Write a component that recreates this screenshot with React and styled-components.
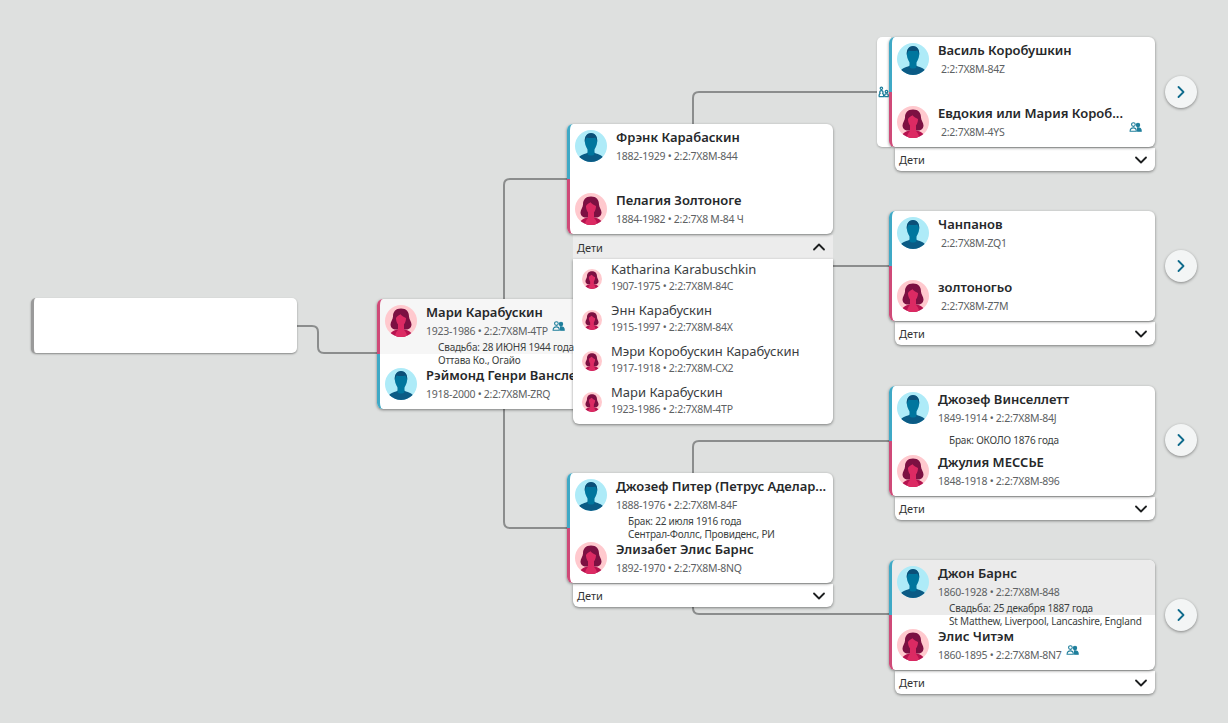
import React from "react";
import styled, { createGlobalStyle } from "styled-components";
import { ChevronRight, ChevronDown, ChevronUp } from "lucide-react";

const Global = createGlobalStyle`
  html, body { margin: 0; padding: 0; background: #dee0df; }
  body { font-family: "Noto Sans", "Open Sans", sans-serif; overflow: hidden; }
`;

const Canvas = styled.div`
  position: relative;
  width: 1228px;
  height: 723px;
  background: #dee0df;
  overflow: hidden;
`;
const Lines = styled.svg`
  position: absolute;
  inset: 0;
  path { fill: none; stroke: #8b8d8d; stroke-width: 2; }
`;
const Node = styled.div`
  position: absolute;
  left: ${(p) => p.$x}px;
  top: ${(p) => p.$y}px;
  width: 266px;
`;
const Couple = styled.div`
  position: relative;
  display: flex;
  flex-direction: column;
  background: #fff;
  border-radius: 6px;
  box-shadow: 0 1px 3px rgba(0, 0, 0, 0.45);
`;
const Person = styled.div`
  position: relative;
  height: 55px;
  box-sizing: border-box;
  display: flex;
  gap: 9px;
  padding: ${(p) => (p.$lower ? "14px" : "6px")} 4px 0 5px;
  background: ${(p) => p.$tint || "transparent"};
  border-left: 3px solid ${(p) => (p.$sex === "f" ? "#cf4a78" : "#3fa9c6")};
  border-radius: ${(p) => (p.$lower ? "0 0 6px 6px" : "6px 6px 0 0")};
`;
const Avatar = styled.span`
  flex: none;
  display: block;
  width: ${(p) => p.$size}px;
  height: ${(p) => p.$size}px;
  border-radius: 50%;
  overflow: hidden;
  svg { display: block; width: 100%; height: 100%; }
`;
const Info = styled.div`
  min-width: 0;
  flex: 1;
`;
const Name = styled.div`
  font-size: 13px;
  line-height: 18px;
  font-weight: 600;
  color: #26282a;
  white-space: nowrap;
  margin-top: -2px;
`;
const Meta = styled.div`
  display: flex;
  align-items: flex-start;
  font-size: 10.5px;
  letter-spacing: -0.25px;
  line-height: 14px;
  color: #5d6163;
  margin-top: ${(p) => (p.$tight ? "2px" : "3px")};
  padding-left: ${(p) => (p.$noYears ? "3px" : "0")};
  white-space: nowrap;
`;
const InlineBadge = styled.span`
  display: inline-flex;
  margin: -3px 0 0 4px;
  color: #1f7f9c;
`;
const CornerBadge = styled.span`
  position: absolute;
  right: 13px;
  bottom: 15px;
  display: inline-flex;
  color: #1f7f9c;
`;
const Marriage = styled.div`
  position: absolute;
  left: ${(p) => p.$left}px;
  top: 54px;
  transform: translateY(-50%);
  font-size: 10px;
  letter-spacing: -0.2px;
  line-height: 12.5px;
  color: #3c3f41;
  white-space: nowrap;
  z-index: 1;
`;
const Footer = styled.div`
  margin: 1px 0 0 6px;
  height: ${(p) => (p.$open ? "24px" : "23px")};
  box-sizing: border-box;
  background: ${(p) => (p.$open ? "#ececec" : "#fff")};
  display: flex;
  align-items: center;
  justify-content: space-between;
  padding: 0 4px 0 4px;
  font-size: 11px;
  color: #333;
  border-radius: ${(p) => (p.$open ? "0" : "0 0 6px 6px")};
  box-shadow: ${(p) => (p.$open ? "none" : "0 1px 3px rgba(0,0,0,.45)")};
  svg { color: #1d1f20; }
`;
const ChildPanel = styled.div`
  margin-left: 6px;
  background: #fff;
  border-radius: 0 0 6px 6px;
  box-shadow: 0 1px 3px rgba(0, 0, 0, 0.45);
  height: 165px;
  overflow: hidden;
`;
const ChildRow = styled.div`
  height: 41px;
  display: flex;
  align-items: center;
  gap: 9px;
  padding-left: 9px;
  > span { margin-top: -1px; }
`;
const ChildName = styled.div`
  font-size: 13px;
  line-height: 16px;
  color: #3a3d3f;
  margin-top: -6px;
  white-space: nowrap;
`;
const Empty = styled.div`
  height: 55px;
  background: #fff;
  border-left: 3px solid #9a9a9a;
  border-radius: 5px;
  box-shadow: 0 1px 2px rgba(0, 0, 0, 0.4);
`;
const Tab = styled.div`
  position: absolute;
  left: -12px;
  top: 0;
  width: 14px;
  height: 110px;
  padding-right: 2px;
  box-sizing: border-box;
  background: #fff;
  border-radius: 5px 0 0 5px;
  box-shadow: 0 1px 2px rgba(0, 0, 0, 0.25);
  display: flex;
  align-items: center;
  justify-content: center;
  color: #1f7f9c;
`;
const Next = styled.button`
  position: absolute;
  left: ${(p) => p.$x}px;
  top: ${(p) => p.$y}px;
  width: 32px;
  height: 32px;
  padding: 0;
  border: 0;
  border-radius: 50%;
  background: #f3f5f5;
  box-shadow: 0 1px 3px rgba(0, 0, 0, 0.4);
  display: flex;
  align-items: center;
  justify-content: center;
  color: #0f6b8c;
`;

const Man = () => (
  <svg viewBox="0 0 32 32">
    <rect width="32" height="32" fill="#aeebf8" />
    <path d="M2 32c0-5 4-7 9-8.500l2-1h6l2 1c5 1.500 9 3.500 9 8.500z" fill="#0b5b85" />
    <path d="M12.500 18h7v6c-1 2-6 2-7 0z" fill="#00769e" />
    <path d="M9.800 11c0-5 2.600-7.500 6.200-7.500S22.200 6 22.200 11c0 5-3 10-6.200 10S9.800 16 9.800 11z" fill="#00769e" />
    <path d="M9.800 12c-.5-6 2.500-9 6.200-9s6.700 3 6.200 9c-.6-2-1-3.500-2-4.500-2 .8-6.500.8-8.400 0-1 1-1.400 2.500-2 4.500z" fill="#0b4f78" />
  </svg>
);
const Woman = () => (
  <svg viewBox="0 0 32 32">
    <rect width="32" height="32" fill="#ffc9ce" />
    <path d="M16 3.500c-5.500 0-8 3.500-8 8 0 3-2.500 5-2.500 8 0 3 2.500 5 5.500 5h10c3 0 5.500-2 5.500-5 0-3-2.500-5-2.500-8 0-4.500-2.500-8-8-8z" fill="#7c1042" />
    <path d="M4.500 32c0-4.500 3.500-6.500 7.500-7.500h8c4 1 7.500 3 7.500 7.500z" fill="#b5124f" />
    <path d="M13 18h6v7c-1 1.500-5 1.500-6 0z" fill="#dc2a63" />
    <path d="M11 13c1-2 3-3 4.500-3.800 1.500 1.800 3.500 3 5.500 3.800 0 4-2 8-5 8s-5-4-5-8z" fill="#dc2a63" />
    <path d="M10 32c0-4 2-6 3-7h6c1 1 3 3 3 7z" fill="#dc2a63" />
  </svg>
);

const RelIcon = () => (
  <svg width="13" height="10" viewBox="0 0 15 12" fill="none" stroke="currentColor" strokeWidth="1.300">
    <circle cx="5" cy="3" r="2.200" />
    <path d="M1 11c0-3 1.500-4 4-4s3.500 1 3.500 4z" />
    <circle cx="10.500" cy="3.500" r="2" fill="currentColor" />
    <path d="M9.800 7c3-.3 4.600 1 4.600 4H10z" fill="currentColor" />
  </svg>
);
const CoupleIcon = () => (
  <svg width="11" height="12" viewBox="0 0 13 13" fill="none" stroke="currentColor" strokeWidth="1.500">
    <circle cx="4" cy="2.200" r="1.400" />
    <path d="M1.500 12c-.6-2 0-3 1-4-.8-1-.6-3 1.500-3s2.300 2 1.500 3c1 1 1.600 2 1 4z" />
    <circle cx="10" cy="6" r="1.500" />
    <path d="M8 12c-.4-2 .2-3 1-3.300h2c.9.300 1.400 1.300 1 3.300z" />
  </svg>
);

const Face = ({ sex, size = 32 }) => (
  <Avatar $size={size}>{sex === "f" ? <Woman /> : <Man />}</Avatar>
);

const PersonRow = ({ p, lower }) => (
  <Person $sex={p.sex} $tint={p.tint} $lower={lower}>
    <Face sex={p.sex} />
    <Info>
      <Name>{p.name}</Name>
      <Meta $noYears={p.noYears}>
        {p.meta}
        {p.badge && (
          <InlineBadge>
            <RelIcon />
          </InlineBadge>
        )}
      </Meta>
    </Info>
    {p.corner && (
      <CornerBadge>
        <RelIcon />
      </CornerBadge>
    )}
  </Person>
);

const kids = [
  ["Katharina Karabuschkin", "1907-1975 • 2:2:7X8M-84C"],
  ["Энн Карабускин", "1915-1997 • 2:2:7X8M-84X"],
  ["Мэри Коробускин Карабускин", "1917-1918 • 2:2:7X8M-CX2"],
  ["Мари Карабускин", "1923-1986 • 2:2:7X8M-4TP"],
];

const nodes = [
  {
    x: 377, y: 299, textLeft: 61,
    a: { sex: "f", name: "Мари Карабускин", meta: "1923-1986 • 2:2:7X8M-4TP", badge: true, tint: "#f6f6f6" },
    b: { sex: "m", name: "Рэймонд Генри Ванслетт", meta: "1918-2000 • 2:2:7X8M-ZRQ" },
    marriage: ["Свадьба: 28 ИЮНЯ 1944 года", "Оттава Ко., Огайо"],
  },
  {
    x: 567, y: 124, open: true,
    a: { sex: "m", name: "Фрэнк Карабаскин", meta: "1882-1929 • 2:2:7X8M-844" },
    b: { sex: "f", name: "Пелагия Золтоноге", meta: "1884-1982 • 2:2:7X8 М-84 Ч" },
  },
  {
    x: 567, y: 473, footer: true, textLeft: 61,
    a: { sex: "m", name: "Джозеф Питер (Петрус Аделар...", meta: "1888-1976 • 2:2:7X8M-84F" },
    b: { sex: "f", name: "Элизабет Элис Барнс", meta: "1892-1970 • 2:2:7X8M-8NQ" },
    marriage: ["Брак: 22 июля 1916 года", "Сентрал-Фоллс, Провиденс, РИ"],
  },
  {
    x: 889, y: 37, footer: true, tab: true,
    a: { sex: "m", name: "Василь Коробушкин", meta: "2:2:7X8M-84Z", noYears: true },
    b: { sex: "f", name: "Евдокия или Мария Короб...", meta: "2:2:7X8M-4YS", noYears: true, corner: true },
  },
  {
    x: 889, y: 211, footer: true,
    a: { sex: "m", name: "Чанпанов", meta: "2:2:7X8M-ZQ1", noYears: true },
    b: { sex: "f", name: "золтоногьо", meta: "2:2:7X8M-Z7M", noYears: true },
  },
  {
    x: 889, y: 386, footer: true, textLeft: 60,
    a: { sex: "m", name: "Джозеф Винселлетт", meta: "1849-1914 • 2:2:7X8M-84J" },
    b: { sex: "f", name: "Джулия МЕССЬЕ", meta: "1848-1918 • 2:2:7X8M-896" },
    marriage: ["Брак: ОКОЛО 1876 года"],
  },
  {
    x: 889, y: 560, footer: true, textLeft: 60,
    a: { sex: "m", name: "Джон Барнс", meta: "1860-1928 • 2:2:7X8M-848", tint: "#ebebeb" },
    b: { sex: "f", name: "Элис Читэм", meta: "1860-1895 • 2:2:7X8M-8N7", badge: true },
    marriage: ["Свадьба: 25 декабря 1887 года", "St Matthew, Liverpool, Lancashire, England"],
  },
];

export default function App() {
  return (
    <Canvas>
      <Global />
      <Lines width="1228" height="723">
        <path d="M297 326h15q6 0 6 6v15q0 6 6 6h54" />
        <path d="M568 179h-58q-6 0-6 6v337q0 6 6 6h58" />
        <path d="M877 92H699q-6 0-6 6v26" />
        <path d="M833 266h57" />
        <path d="M890 441H699q-6 0-6 6v26" />
        <path d="M890 614H699q-6 0-6-6v-2" />
      </Lines>
      <Node $x={31} $y={298}>
        <Empty />
      </Node>
      {nodes.map((n) => (
        <Node key={n.a.name} $x={n.x} $y={n.y}>
          {n.tab && (
            <Tab>
              <CoupleIcon />
            </Tab>
          )}
          <Couple>
            <PersonRow p={n.a} />
            <PersonRow p={n.b} lower />
            {n.marriage && (
              <Marriage $left={n.textLeft}>
                {n.marriage.map((l) => (
                  <div key={l}>{l}</div>
                ))}
              </Marriage>
            )}
          </Couple>
          {n.footer && (
            <Footer>
              Дети
              <ChevronDown size={20} strokeWidth={2.2} />
            </Footer>
          )}
          {n.open && (
            <>
              <Footer $open>
                Дети
                <ChevronUp size={20} strokeWidth={2.2} />
              </Footer>
              <ChildPanel>
                {kids.map(([name, meta]) => (
                  <ChildRow key={name}>
                    <Face sex="f" size={20} />
                    <Info>
                      <ChildName>{name}</ChildName>
                      <Meta $tight>{meta}</Meta>
                    </Info>
                  </ChildRow>
                ))}
              </ChildPanel>
            </>
          )}
        </Node>
      ))}
      {[76, 250, 424, 599].map((y) => (
        <Next key={y} $x={1165} $y={y} aria-label="Далее">
          <ChevronRight size={20} strokeWidth={2.2} />
        </Next>
      ))}
    </Canvas>
  );
}
